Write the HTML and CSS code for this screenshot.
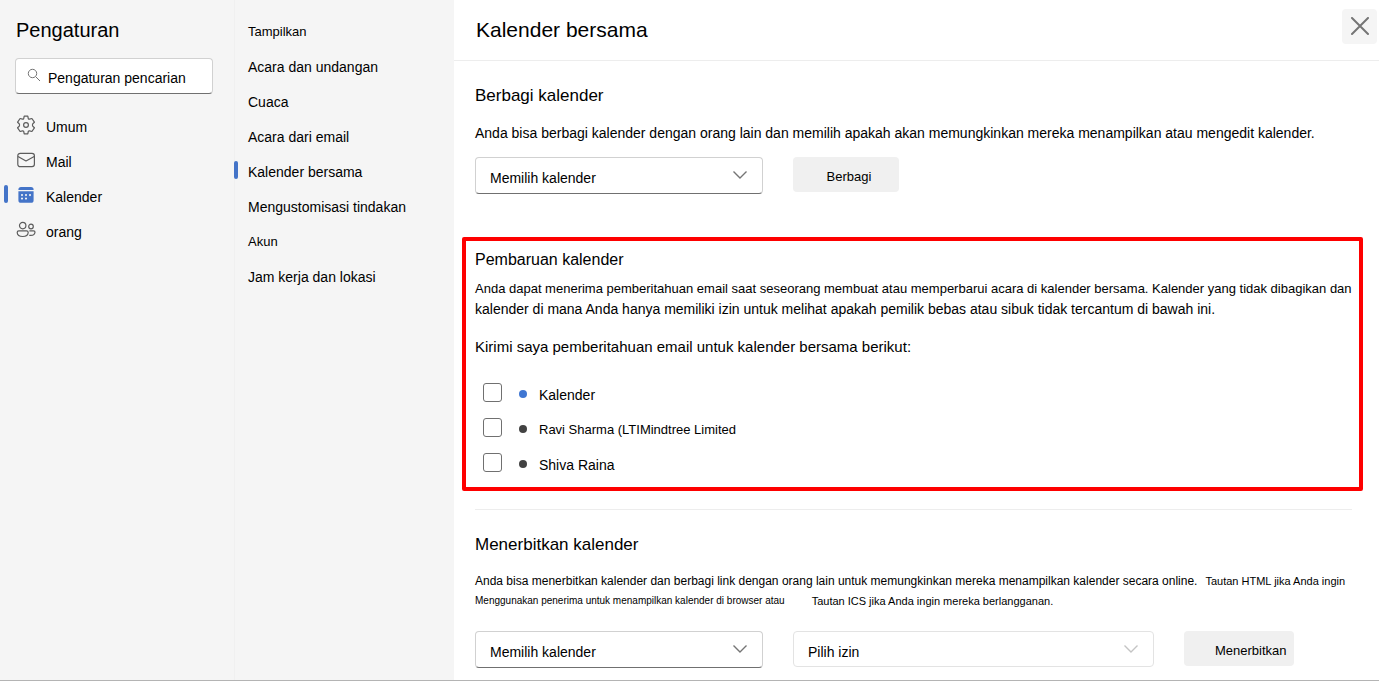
FILE: index.html
```html
<!DOCTYPE html>
<html lang="id">
<head>
<meta charset="utf-8">
<title>Pengaturan</title>
<link rel="stylesheet" href="styles.css">
</head>
<body>
<div class="app">
  <aside class="sidebar">
    <h1 class="title">Pengaturan</h1>
    <label class="search">
      <svg class="search-icon" viewBox="0 0 14 14" width="14" height="14" aria-hidden="true"><circle cx="5.5" cy="5.5" r="4.2"/><path d="M8.600 8.600L13 13"/></svg>
      <input class="search-input" type="search" placeholder="Pengaturan pencarian" aria-label="Pengaturan pencarian">
    </label>
    <nav class="nav">
      <a class="nav-item" href="#umum">
        <svg class="icon" viewBox="0 0 20 20" width="20" height="20" aria-hidden="true"><path d="M8.2 1.2L11.8 1.2L12.3 3.6Q12.7 4.3 13.5 4.2L15.9 3.5L18.400 7.200L16.800 8.700Q16 10 16.800 11.300L18.400 12.800L15.9 16.5L13.5 15.8Q12.7 15.7 12.3 16.4L11.8 18.8L8.2 18.8L7.7 16.4Q7.3 15.7 6.5 15.8L4.1 16.5L1.600 12.800L3.200 11.300Q4 10 3.200 8.700L1.600 7.200L4.1 3.5L6.5 4.2Q7.3 4.3 7.7 3.6Z"/><circle cx="10" cy="10" r="2.4"/></svg>
        <span>Umum</span>
      </a>
      <a class="nav-item" href="#mail">
        <svg class="icon" viewBox="0 0 20 20" width="20" height="20" aria-hidden="true"><rect x="1.8" y="3.3" width="16.6" height="13.4" rx="2.4"/><path d="M2 6.5L10 11L18.2 6.5"/></svg>
        <span>Mail</span>
      </a>
      <a class="nav-item current" href="#kalender" aria-current="page">
        <svg class="icon filled" viewBox="0 0 20 20" width="20" height="20" aria-hidden="true"><path d="M2.4 5V4.600Q2.400 2 5 2H15Q17.600 2 17.600 4.600V5Z"/><path fill-rule="evenodd" d="M2.400 6.200H17.600V15.200Q17.600 17.800 15 17.800H5Q2.400 17.800 2.400 15.200ZM6 8.900A1 1 0 1 0 6.010 8.900ZM10 8.900A1 1 0 1 0 10.010 8.900ZM14 8.900A1 1 0 1 0 14.010 8.900ZM6 12.400A1 1 0 1 0 6.010 12.400ZM10 12.400A1 1 0 1 0 10.010 12.400Z"/></svg>
        <span>Kalender</span>
      </a>
      <a class="nav-item" href="#orang">
        <svg class="icon" viewBox="0 0 20 20" width="20" height="20" aria-hidden="true"><circle cx="6.700" cy="5.600" r="3.200"/><circle cx="15" cy="6.500" r="2.300"/><path d="M2.800 10.900H10.600Q12.200 10.900 12.200 12.500Q12 16.500 6.700 16.500Q1.400 16.500 1.200 12.500Q1.200 10.900 2.800 10.900Z"/><path d="M13.400 10.900H17.600Q19 10.900 19 12.300Q18.700 15.400 14.800 15.400L13.300 15.300"/></svg>
        <span>orang</span>
      </a>
    </nav>
  </aside>

  <nav class="subnav" aria-label="Kalender">
    <a class="subnav-item small" href="#tampilkan">Tampilkan</a>
    <a class="subnav-item" href="#acara">Acara dan undangan</a>
    <a class="subnav-item" href="#cuaca">Cuaca</a>
    <a class="subnav-item" href="#email">Acara dari email</a>
    <a class="subnav-item current" href="#bersama" aria-current="page">Kalender bersama</a>
    <a class="subnav-item" href="#tindakan">Mengustomisasi tindakan</a>
    <a class="subnav-item small" href="#akun">Akun</a>
    <a class="subnav-item" href="#jam">Jam kerja dan lokasi</a>
  </nav>

  <main class="main">
    <header class="header">
      <h2 class="title large">Kalender bersama</h2>
      <button class="close" type="button" aria-label="Tutup"><svg viewBox="0 0 20 20" width="20" height="20" aria-hidden="true"><path d="M2 1L18 17M18 1L2 17"/></svg></button>
    </header>

    <section class="section share">
      <h3 class="heading">Berbagi kalender</h3>
      <p class="text">Anda bisa berbagi kalender dengan orang lain dan memilih apakah akan memungkinkan mereka menampilkan atau mengedit kalender.</p>
      <div class="controls">
        <div class="dropdown">
          <select class="select" aria-label="Kalender untuk dibagikan"><option>Memilih kalender</option></select>
          <svg class="chevron" viewBox="0 0 16 10" width="16" height="10" aria-hidden="true"><path d="M1.500 1.500L8 8L14.500 1.500"/></svg>
        </div>
        <button class="button share-button" type="button">Berbagi</button>
      </div>
    </section>

    <section class="section updates">
      <h3 class="heading compact">Pembaruan kalender</h3>
      <p class="text"><span class="line dense">Anda dapat menerima pemberitahuan email saat seseorang membuat atau memperbarui acara di kalender bersama. Kalender yang tidak dibagikan dan</span>
      <span class="line">kalender di mana Anda hanya memiliki izin untuk melihat apakah pemilik bebas atau sibuk tidak tercantum di bawah ini.</span></p>
      <p class="text prompt">Kirimi saya pemberitahuan email untuk kalender bersama berikut:</p>
      <ul class="checks">
        <li><label class="check"><input class="box" type="checkbox"><span class="dot blue"></span><span class="name">Kalender</span></label></li>
        <li><label class="check"><input class="box" type="checkbox"><span class="dot"></span><span class="name dense">Ravi Sharma (LTIMindtree Limited</span></label></li>
        <li><label class="check"><input class="box" type="checkbox"><span class="dot"></span><span class="name">Shiva Raina</span></label></li>
      </ul>
    </section>

    <section class="section publish">
      <h3 class="heading">Menerbitkan kalender</h3>
      <div class="notes">
        <p class="note first"><span>Anda bisa menerbitkan kalender dan berbagi link dengan orang lain untuk memungkinkan mereka menampilkan kalender secara online.</span><span class="aside">Tautan HTML jika Anda ingin</span></p>
        <p class="note"><span class="tiny">Menggunakan penerima untuk menampilkan kalender di browser atau</span><span class="aside">Tautan ICS jika Anda ingin mereka berlangganan.</span></p>
      </div>
      <div class="controls">
        <div class="dropdown">
          <select class="select" aria-label="Kalender untuk diterbitkan"><option>Memilih kalender</option></select>
          <svg class="chevron" viewBox="0 0 16 10" width="16" height="10" aria-hidden="true"><path d="M1.500 1.500L8 8L14.500 1.500"/></svg>
        </div>
        <div class="dropdown wide">
          <select class="select muted" aria-label="Izin"><option>Pilih izin</option></select>
          <svg class="chevron pale" viewBox="0 0 16 10" width="16" height="10" aria-hidden="true"><path d="M1.500 1.500L8 8L14.500 1.500"/></svg>
        </div>
        <button class="button publish-button" type="button">Menerbitkan</button>
      </div>
    </section>
  </main>
</div>
</body>
</html>
```

FILE: styles.css
```css
* {
  box-sizing: border-box;
}

body {
  margin: 0;
  background: #fff;
  color: #000;
  font: 14px/20px "Liberation Sans", Arial, sans-serif;
}

h1, h2, h3, p, ul {
  margin: 0;
  padding: 0;
  font-weight: 400;
}

ul {
  list-style: none;
}

a {
  color: inherit;
  text-decoration: none;
}

button, input, select {
  font: inherit;
  color: inherit;
}

.app {
  display: grid;
  grid-template-columns: 234px 220px 1fr;
  min-height: 100vh;
  border-bottom: 1px solid #b4b4b4;
}

/* Left navigation */
.sidebar {
  padding-top: 16px;
  background: #f5f5f5;
}

.title {
  font-size: 20px;
  line-height: 28px;
}

.title.large {
  font-size: 21px;
}

.sidebar .title {
  padding-left: 16px;
}

.search {
  display: flex;
  align-items: center;
  gap: 7px;
  height: 36px;
  margin: 14px 21px 14px 15px;
  padding-left: 11px;
  background: #fff;
  border: 1px solid #d1d1d1;
  border-bottom-color: #707070;
  border-radius: 4px;
}

.search-icon {
  flex: none;
  margin-bottom: 2px;
  fill: none;
  stroke: #757575;
}

.search-input {
  flex: 1;
  min-width: 0;
  height: 100%;
  padding: 4px 0 0;
  border: 0;
  outline: 0;
  background: none;
  appearance: none;
}

.search-input::placeholder {
  color: #000;
  opacity: 1;
}

.nav-item {
  position: relative;
  display: flex;
  align-items: center;
  gap: 10px;
  height: 35px;
  padding-left: 16px;
}

.nav-item span {
  padding-top: 2px;
}

.nav-item .icon {
  margin-bottom: 1px;
}

.icon {
  fill: none;
  stroke: #5c5c5c;
  stroke-width: 1.2;
  stroke-linejoin: round;
}

.icon.filled {
  fill: #4474c8;
  stroke: none;
}

.current::before {
  content: "";
  position: absolute;
  top: 7px;
  left: 4px;
  width: 4px;
  height: 18px;
  border-radius: 2px;
  background: #4474c8;
}

/* Category navigation */
.subnav {
  padding-top: 14px;
  background: #f5f5f5;
  border-left: 1px solid #f0f0f0;
}

.subnav-item {
  position: relative;
  display: flex;
  align-items: center;
  height: 35px;
  padding-left: 13px;
}

.subnav-item.small {
  font-size: 13px;
}

.subnav-item.current::before {
  left: -1px;
}

/* Content */
.header {
  display: flex;
  justify-content: space-between;
  height: 61px;
  padding: 9px 2px 0 22px;
  border-bottom: 1px solid #ededed;
}

.header .title {
  padding-top: 7px;
}

.close {
  display: grid;
  place-items: center;
  width: 35px;
  height: 35px;
  padding: 0;
  border: 0;
  border-radius: 4px;
  background: #f5f5f5;
}

.close svg {
  stroke: #757575;
  stroke-width: 2;
  stroke-linecap: round;
}

.section {
  margin: 0 16px 0 8px;
  padding: 0 13px;
}

.heading {
  font-size: 17px;
  line-height: 24px;
}

.heading.compact {
  font-size: 16px;
}

.text {
  line-height: 21px;
}

.line {
  display: block;
}

.dense {
  font-size: 13px;
}

.share {
  padding-top: 23px;
  padding-bottom: 43px;
}

.share .text {
  padding: 15px 0 13px;
}

.controls {
  display: flex;
  align-items: flex-start;
  gap: 30px;
}

.dropdown {
  position: relative;
  flex: 0 1 288px;
}

.dropdown.wide {
  flex-basis: 361px;
}

.select {
  display: block;
  width: 100%;
  height: 37px;
  padding: 5px 40px 0 14px;
  border: 1px solid #d1d1d1;
  border-bottom-color: #707070;
  border-radius: 4px;
  background: #fff;
  appearance: none;
}

.select.muted {
  height: 36px;
  border-color: #e3e3e3;
}

.chevron {
  position: absolute;
  top: 13px;
  right: 15px;
  fill: none;
  stroke: #757575;
  stroke-width: 1.4;
  pointer-events: none;
}

.chevron.pale {
  stroke: #c4c4c4;
}

.button {
  height: 35px;
  border: 0;
  border-radius: 4px;
  background: #f0f0f0;
  white-space: nowrap;
}

.share-button {
  width: 106px;
  padding: 4px 0 0 6px;
  font-size: 13px;
}

.publish-button {
  width: 110px;
  padding: 4px 8px 0 31px;
  font-size: 13px;
}

.updates {
  padding: 7px 0 6px 9px;
  border: 4px solid #fe0000;
  border-radius: 2px;
}

.updates .text {
  padding-top: 6px;
}

.updates .prompt {
  padding-top: 16px;
  font-size: 15px;
}

.checks {
  padding: 18px 0 1px 8px;
}

.check {
  display: flex;
  align-items: center;
  height: 35px;
}

.box {
  width: 19px;
  height: 19px;
  margin: 0;
  border: 1px solid #707070;
  border-radius: 3px;
  background: #fff;
  appearance: none;
}

.box:checked {
  background: #4474c8;
}

.dot {
  width: 8px;
  height: 8px;
  margin: 2px 12px 0 17px;
  border-radius: 50%;
  background: #424242;
}

.dot.blue {
  background: #3f76d2;
}

.name {
  padding-top: 4px;
}

.publish {
  margin: 18px 11px 0 21px;
  padding: 0;
}

.publish::before {
  content: "";
  display: block;
  margin: 0 16px 23px 0;
  border-top: 1px solid #ededed;
}

.notes {
  padding: 14px 0 20px;
}

.note {
  display: flex;
  gap: 27px;
  font-size: 12px;
  line-height: 20px;
}

.note.first {
  gap: 8px;
}

.aside {
  font-size: 11px;
}

.tiny {
  font-size: 10px;
}
```
